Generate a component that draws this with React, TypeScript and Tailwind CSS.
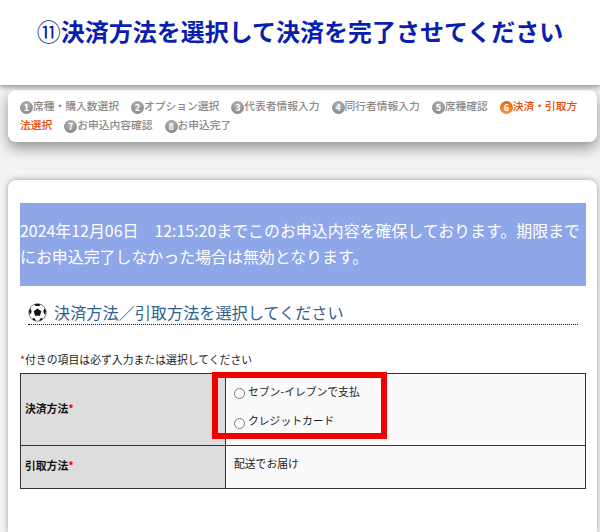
const jp = '"Noto Sans CJK JP", sans-serif';

const steps = [
  { n: '1', t: '席種・購入数選択' },
  { n: '2', t: 'オプション選択' },
  { n: '3', t: '代表者情報入力' },
  { n: '4', t: '同行者情報入力' },
  { n: '5', t: '席種確認' },
  { n: '6', t: '決済・引取方法選択', active: true },
  { n: '7', t: 'お申込内容確認' },
  { n: '8', t: 'お申込完了' },
];

function Ball() {
  return (
    <svg width="19" height="19" viewBox="0 0 20 20" className="shrink-0">
      <circle cx="10" cy="10" r="9.2" fill="#fff" stroke="#555" strokeWidth="0.8" />
      <path d="M10 5.8 14 8.7 12.5 13.4 7.5 13.4 6 8.7Z" fill="#111" />
      <path d="M6.5 1.6 10 .8 13.5 1.6 12 3.2 8 3.2Z" fill="#111" />
      <path d="M1 8.5 3 5.5 3.8 9.5 2 12.5Z" fill="#111" />
      <path d="M19 8.5 17 5.5 16.2 9.5 18 12.5Z" fill="#111" />
      <path d="M4.5 15.5 7.5 16.5 8 19 5.5 18Z" fill="#111" />
      <path d="M15.5 15.5 12.5 16.5 12 19 14.5 18Z" fill="#111" />
    </svg>
  );
}

function Star() {
  return <span className="text-[#f00000]">*</span>;
}

export default function App() {
  return (
    <div className="w-[600px] h-[532px] overflow-hidden bg-[#f3f3f3]" style={{ fontFamily: jp }}>
      <header className="relative h-[85px] bg-white shadow-[0_2px_5px_rgba(0,0,0,0.4)]">
        <h1 className="pt-[16px] text-center text-[24px] leading-[30px] font-bold text-[#0a1fb0] whitespace-nowrap">
          <span className="font-normal">⑪</span>決済方法を選択して決済を完了させてください
        </h1>
      </header>

      <nav className="ml-[8px] mt-[5px] w-[589px] h-[52px] rounded-[8px] bg-white px-[12px] pt-[6px] text-[10.75px] leading-[19px] font-medium text-[#8a8a8a] shadow-[0_6px_14px_rgba(0,0,0,0.4)]">
        {steps.map((s) => (
          <span key={s.n} className={s.active ? 'text-[#e84a00]' : ''}>
            <span
              className={
                'inline-block w-[13px] h-[13px] rounded-full text-center align-[-1px] text-[9px] leading-[13px] font-bold text-white ' +
                (s.active
                  ? 'bg-[radial-gradient(circle_at_50%_70%,#f7a24a,#e8500a)]'
                  : 'bg-[radial-gradient(circle_at_50%_30%,#b5b5b5,#7d7d7d)]')
              }
            >
              {s.n}
            </span>
            {s.t}
            <span className="inline-block w-[12px]"> </span>
          </span>
        ))}
      </nav>

      <main className="ml-[8px] mt-[38px] w-[589px] h-[352px] rounded-t-[8px] bg-white px-[12px] pt-[23px] shadow-[0_0_6px_rgba(0,0,0,0.35)]">
        <div className="w-[566px] h-[83px] bg-[#8ea7e9] pt-[15px] text-[15.93px] leading-[26px] text-white">
          2024年12月06日　12:15:20までこのお申込内容を確保しております。期限までにお申込完了しなかった場合は無効となります。
        </div>

        <h2 className="mt-[17px] ml-[8px] w-[550px] h-[22px] flex items-center gap-[7px] border-b border-dotted border-[#111] pb-[3px] text-[16.15px] leading-[20px] font-normal text-[#2e6291]">
          <Ball />
          決済方法／引取方法を選択してください
        </h2>

        <p className="mt-[26px] text-[10.85px] leading-[16px] text-[#222]">
          <Star />付きの項目は必ず入力または選択してください
        </p>

        <div className="relative mt-[6px] w-[566px]">
          <table className="w-full border-collapse text-[10.8px] text-[#222]">
            <tbody>
              <tr className="h-[72px]">
                <th className="w-[205px] border border-[#333] bg-[#dddddd] pl-[4px] pb-[2px] text-left font-bold text-[#111]">
                  決済方法<Star />
                </th>
                <td className="border border-[#333] bg-[#fafafa] pl-[8px] align-top">
                  <label className="flex h-[29px] mt-[3px] items-center gap-[3px]">
                    <input type="radio" name="pay" className="m-0 mt-[4px] h-[11px] w-[11px]" />
                    <span>セブン-イレブンで支払</span>
                  </label>
                  <label className="flex h-[29px] items-center gap-[3px]">
                    <input type="radio" name="pay" className="m-0 mt-[5px] h-[11px] w-[11px]" />
                    <span>クレジットカード</span>
                  </label>
                </td>
              </tr>
              <tr className="h-[43px]">
                <th className="border border-[#333] bg-[#dddddd] pl-[4px] pb-[4px] text-left font-bold text-[#111]">
                  引取方法<Star />
                </th>
                <td className="border border-[#333] bg-[#fafafa] pl-[8px] pb-[8px]">配送でお届け</td>
              </tr>
            </tbody>
          </table>
          <div className="absolute left-[192px] top-[-1px] w-[175px] h-[67px] border-[6px] border-[#f00000]" />
        </div>
      </main>
    </div>
  );
}
